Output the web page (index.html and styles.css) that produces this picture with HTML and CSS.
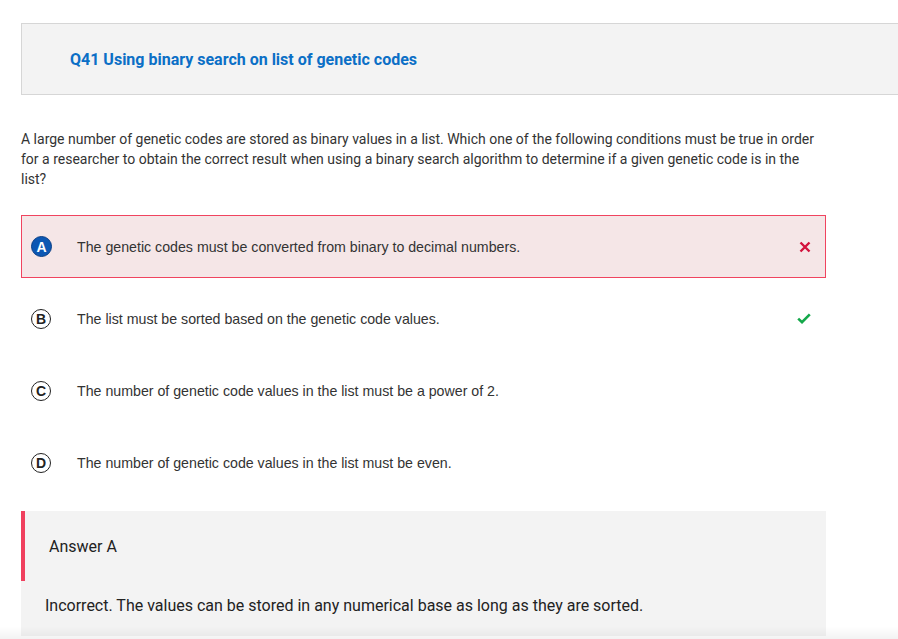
FILE: index.html
```html
<!DOCTYPE html>
<html>
<head>
<meta charset="utf-8">
<link rel="stylesheet" href="styles.css">
</head>
<body>
<div class="page">
  <div class="qhead"><h1 class="qtitle">Q41 Using binary search on list of genetic codes</h1></div>
  <p class="qtext">A large number of genetic codes are stored as binary values in a list. Which one of the following conditions must be true in order for a researcher to obtain the correct result when using a binary search algorithm to determine if a given genetic code is in the list?</p>
  <ul class="options">
    <li class="opt opt-wrong">
      <span class="letter letter-sel">A</span>
      <span class="opt-text">The genetic codes must be converted from binary to decimal numbers.</span>
      <svg class="mark" width="12" height="12" viewBox="0 0 12 12"><path d="M1.5 1.5 L10.5 10.5 M10.5 1.5 L1.5 10.5" stroke="#d3123c" stroke-width="2.4" fill="none"/></svg>
    </li>
    <li class="opt">
      <span class="letter">B</span>
      <span class="opt-text">The list must be sorted based on the genetic code values.</span>
      <svg class="mark" width="14" height="11" viewBox="0 0 14 11"><path d="M1.2 5.6 L5 9.2 L12.8 1.4" stroke="#14a84a" stroke-width="2.6" fill="none"/></svg>
    </li>
    <li class="opt">
      <span class="letter">C</span>
      <span class="opt-text">The number of genetic code values in the list must be a power of 2.</span>
    </li>
    <li class="opt">
      <span class="letter">D</span>
      <span class="opt-text">The number of genetic code values in the list must be even.</span>
    </li>
  </ul>
  <div class="answer">
    <div class="answer-head">Answer A</div>
    <p class="answer-body">Incorrect. The values can be stored in any numerical base as long as they are sorted.</p>
  </div>
</div>
<div class="fade"></div>
</body>
</html>
```

FILE: styles.css
```css
html, body {
  margin: 0;
  padding: 0;
  background: #fff;
  overflow: hidden;
}
body {
  font-family: Roboto, "Liberation Sans", sans-serif;
  color: #333;
  width: 898px;
  height: 639px;
}
.page {
  padding: 23px 0 0 21px;
}
.qhead {
  height: 70px;
  margin-right: -20px;
  background: #f3f3f3;
  border: 1px solid #d6d6d6;
  display: flex;
  align-items: center;
}
.qtitle {
  margin: 0 0 0 48px;
  font-size: 16px;
  font-weight: 700;
  color: #0b6fc6;
}
.qtext {
  margin: 34px 0 0 0;
  width: 800px;
  font-size: 14px;
  line-height: 20px;
  color: #333;
}
.options {
  list-style: none;
  margin: 26px 0 0 0;
  padding: 0;
  width: 805px;
  display: flex;
  flex-direction: column;
  gap: 9px;
}
.opt {
  box-sizing: border-box;
  height: 63px;
  display: flex;
  align-items: center;
  font-family: "Liberation Sans", Arial, sans-serif;
  font-size: 14.2px;
  color: #333;
}
.opt.opt-wrong {
  background: #f5e6e7;
  box-shadow: inset 0 0 0 1px #f0445f;
}
.letter {
  box-sizing: border-box;
  width: 20px;
  height: 20px;
  margin-left: 10px;
  border: 1px solid #222;
  border-radius: 50%;
  display: flex;
  align-items: center;
  justify-content: center;
  font-family: "Liberation Sans", Arial, sans-serif;
  font-weight: 700;
  font-size: 14px;
  color: #222;
}
.letter.letter-sel {
  width: 21px;
  height: 21px;
  background: #0c57b3;
  border: 1.5px solid #0a3f86;
  color: #fff;
}
.opt-text {
  margin-left: 26px;
  flex: 1;
}
.letter-sel + .opt-text {
  margin-left: 25px;
}
.mark {
  margin-right: 15px;
}
.answer {
  margin-top: 17px;
  width: 805px;
  background: #f3f3f3;
  padding-bottom: 20px;
}
.answer-head {
  height: 70px;
  border-left: 4px solid #f0405e;
  padding-left: 24px;
  display: flex;
  align-items: center;
  font-size: 16px;
  color: #222;
}
.answer-body {
  margin: 15px 0 0 24px;
  font-size: 16px;
  line-height: 20px;
  color: #222;
}
.fade {
  position: fixed;
  left: 0;
  right: 0;
  bottom: 0;
  height: 12px;
  background: linear-gradient(to bottom, rgba(0,0,0,0), rgba(0,0,0,0.05));
}
```
